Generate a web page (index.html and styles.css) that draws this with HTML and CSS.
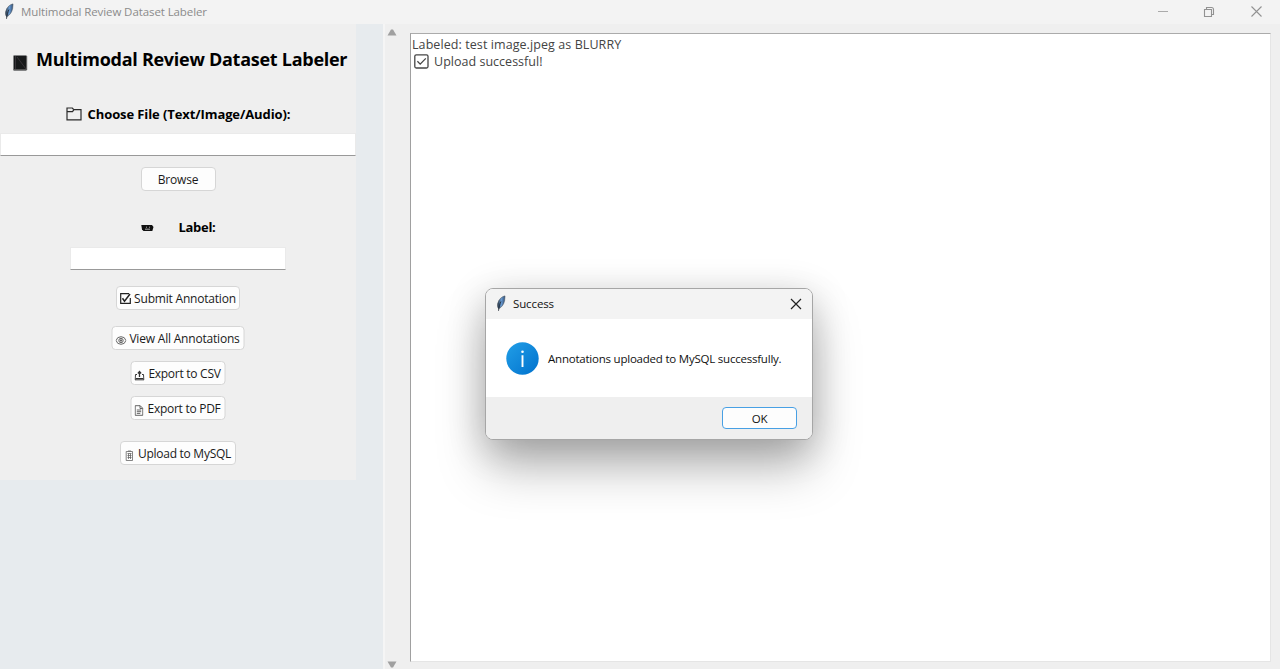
FILE: index.html
```html
<!DOCTYPE html>
<html lang="en">
<head>
<meta charset="utf-8">
<title>Multimodal Review Dataset Labeler</title>
<link rel="stylesheet" href="styles.css">
</head>
<body>
<svg class="defs" width="0" height="0">
  <defs>
    <linearGradient id="quill" x1="0" y1="0" x2="1" y2="0"><stop offset="0" stop-color="#27323e"/><stop offset=".5" stop-color="#6a9cd4"/><stop offset="1" stop-color="#2f4f78"/></linearGradient>
    <symbol id="feather" viewBox="0 0 10 17">
      <path d="M9 .9C6 1.500 2.800 4 1.700 8.500 1.200 11 1.600 12.500 2.700 13.800 5.800 12.300 8 9 8.600 5.500Z" fill="url(#quill)" stroke="#4a5561" stroke-width=".6"/>
      <path d="M5 6.500C3.800 9 3 11.500 2.500 15.800" fill="none" stroke="#18202a" stroke-width=".8"/>
    </symbol>
  </defs>
</svg>
<div class="window">
  <header class="titlebar">
    <svg class="feather" width="10" height="17"><use href="#feather"/></svg>
    <span class="window-title">Multimodal Review Dataset Labeler</span>
    <svg class="controls" width="110" height="14" viewBox="0 0 110 14" fill="none" stroke="#929292">
      <path d="M3 7.500h10" stroke="#aaa"/>
      <path d="M49.500 5.500h7v7h-7zM51.500 5.500v-2h5q2 0 2 2v5h-2" stroke-width="1.100"/>
      <path d="M96.500 2.500l10 10m0-10l-10 10" stroke-width="1.100"/>
    </svg>
  </header>
  <main class="content">
    <aside class="sidebar">
      <section class="panel">
        <h1 class="heading">
          <svg class="book" width="15" height="17" viewBox="0 0 15 17"><path d="M.5 1.500h13v15H.5z" fill="#17191a"/><path d="M2.500 2v14M4 3l9 12" stroke="#373338"/><path d="M.8 15.500h12.500M13.700 2v14" stroke="#555"/></svg>
          <span class="heading-text">Multimodal Review Dataset Labeler</span>
        </h1>
        <div class="field-label file-label">
          <svg width="16" height="14" viewBox="0 0 16 14" fill="none" stroke="#2b2b2b" stroke-width="1.200"><path d="M1 12.800V1h5.300l1.500 1.700H15v10.100zM1 4.600h5.500l1.300-1.800"/></svg>
          <span class="file-text">Choose File (Text/Image/Audio):</span>
        </div>
        <input class="entry entry-file" aria-label="File">
        <button class="button browse"><span>Browse</span></button>
        <div class="field-label tag-label">
          <svg class="tag" width="13" height="8" viewBox="0 0 13 8"><path d="M.3 1h10.700l1.500 2-1.200 4H2.500L1 5.500Z" fill="#111"/><path d="M4 5.200h5M5 3.200h1M8 3.200h1" stroke="#aaa"/></svg>
          <span class="tag-text">Label:</span>
        </div>
        <input class="entry entry-label" aria-label="Label">
        <button class="button submit">
          <svg width="11" height="11" viewBox="0 0 11 11" fill="none" stroke="#222"><path d="M9 .7H.7v9.600h9.600V5" stroke-width="1.200"/><path d="M2.500 5.300l2 2.900L10 1" stroke-width="1.500"/></svg>
          <span>Submit Annotation</span>
        </button>
        <button class="button view">
          <svg class="low" width="11" height="9" viewBox="0 0 11 9" fill="none" stroke="#666"><path d="M.6 4.500Q1.500.7 5.500.7t4.900 3.800Q9.500 8.300 5.500 8.300T.6 4.500Z"/><circle cx="5.500" cy="4.500" r="2.200"/><circle cx="5.500" cy="4.500" r=".8" fill="#333"/></svg>
          <span>View All Annotations</span>
        </button>
        <button class="button csv">
          <svg class="low" width="10" height="11" viewBox="0 0 10 11" fill="none" stroke="#333"><path d="M2.500 4.500H1L.5 9.800h9L9 4.500H7.500M1 8.500h8"/><path d="M5 7V2M3.400 3.500 5 1.500l1.600 2" stroke-width="1.300"/></svg>
          <span>Export to CSV</span>
        </button>
        <button class="button pdf">
          <svg class="low" width="9" height="11" viewBox="0 0 9 11" fill="none" stroke="#555"><path d="M.7.700h5l2.600 2.600v7H.7zM5.500.8v2.700h2.700M2.300 5h4.400M2.300 6.700h4.400M2.300 8.400h3.500" stroke-width=".9"/></svg>
          <span>Export to PDF</span>
        </button>
        <button class="button mysql">
          <svg class="low" width="9" height="11" viewBox="0 0 9 11" fill="none" stroke="#666"><path d="M1.200 1.500h6.300v9H1.200zM3 1h3M2.500 3.500h4M2.500 5.500h4M2.500 7.500h4M3.500 3.500v5.500M5.500 3.500v5.500" stroke-width=".8"/></svg>
          <span>Upload to MySQL</span>
        </button>
      </section>
    </aside>
    <div class="scrollbar">
      <svg width="10" height="7" viewBox="0 0 10 7"><path d="M4 .5h2L9.500 6.500H.5z" fill="#a0a0a0"/></svg>
      <svg width="10" height="7" viewBox="0 0 10 7"><path d="M.5.500h9L6 6.500H4z" fill="#a0a0a0"/></svg>
    </div>
    <section class="log">
      <p class="log-line"><span class="log-one">Labeled: test image.jpeg as BLURRY</span></p>
      <p class="log-line">
        <svg width="15" height="15" viewBox="0 0 15 15" fill="none" stroke="#454545" stroke-width="1.300"><rect x=".8" y=".8" width="13.200" height="13.200" rx="1.500"/><path d="M3.400 7.300l2.800 2.800 5.600-5.700"/></svg>
        <span class="log-two">Upload successful!</span>
      </p>
    </section>
  </main>
  <div class="dialog" role="dialog" aria-label="Success">
    <header class="dialog-title">
      <svg class="feather" width="10" height="17"><use href="#feather"/></svg>
      <span class="dialog-name">Success</span>
      <svg class="dialog-close" width="12" height="12" viewBox="0 0 12 12" stroke="#222" stroke-width="1.200"><path d="M1 1l10 10M11 1L1 11"/></svg>
    </header>
    <div class="dialog-body">
      <svg width="33" height="33" viewBox="0 0 33 33"><defs><linearGradient id="info" x1="0" y1="0" x2="1" y2="1"><stop offset="0" stop-color="#229fe7"/><stop offset="1" stop-color="#0071cd"/></linearGradient></defs><circle cx="16.500" cy="16.500" r="16.200" fill="url(#info)"/><circle cx="16.500" cy="9.800" r="1.300" fill="#fff"/><path d="M16.500 13.300V25" stroke="#fff" stroke-width="1.900"/></svg>
      <span class="message">Annotations uploaded to MySQL successfully.</span>
    </div>
    <footer class="dialog-footer"><button class="ok">OK</button></footer>
  </div>
</div>
</body>
</html>
```
FILE: styles.css
```css
* { box-sizing: border-box; }
body { margin: 0; overflow: hidden; font-family: "Open Sans", "Noto Sans", sans-serif; color: #111; }
button, input { font-family: inherit; }
svg { flex: none; display: block; }
span { white-space: nowrap; }
.defs { position: absolute; }
.window { position: relative; height: 669px; background: #efefef; display: flex; flex-direction: column; }
.titlebar { height: 24px; flex: none; background: #f3f3f3; display: flex; align-items: center; padding: 0 15px 2px 4px; }
.window-title { margin-left: 7px; font-size: 11.5px; letter-spacing: -.09px; color: #8b8b8b; }
.controls { margin-left: auto; margin-top: -1px; }
.content { flex: 1; display: flex; }
.sidebar { width: 383px; background: #e7ebee; }
.panel { width: 356px; height: 456px; background: #efefef; display: flex; flex-direction: column; align-items: center; }
.heading { margin: 21px 0 0; width: 100%; height: 28px; padding-left: 13px; display: flex; align-items: center; font-size: 18px; font-weight: 700; color: #000; }
.book { margin: 6px 8px 0 0; }
.heading-text { letter-spacing: -.27px; }
.field-label { display: flex; align-items: center; height: 20px; font-size: 13px; font-weight: 700; color: #000; }
.file-label { margin-top: 31px; gap: 6px; }
.file-text { letter-spacing: -.1px; }
.entry { border: 1px solid #eaeaea; border-bottom-color: #999; background: #fff; height: 23px; padding: 0 4px; flex: none; }
.entry-file { width: 356px; margin-top: 9px; }
.button { flex: none; height: 24px; border: 1px solid #d6d6d6; border-radius: 4px; background: #fdfdfd; display: flex; align-items: center; justify-content: center; gap: 3px; padding: 0; font-size: 12px; letter-spacing: -.2px; color: #1a1a1a; }
.low { margin-top: 4px; }
.browse { width: 75px; margin-top: 11px; }
.tag-label { margin-top: 26px; gap: 25px; }
.tag { margin-top: 2px; }
.tag-text { letter-spacing: -.3px; }
.entry-label { width: 216px; margin-top: 10px; }
.submit { width: 124px; margin-top: 16px; }
.view { width: 133px; margin-top: 16px; }
.csv { width: 95px; margin-top: 11px; }
.pdf { width: 95px; margin-top: 11px; }
.mysql { width: 116px; margin-top: 21px; }
.view, .csv, .pdf { transform: translateX(-.5px); }
.csv, .pdf, .mysql { letter-spacing: -.27px; gap: 4px; }
.scrollbar { width: 18px; border-left: 2px solid #f5f5f5; display: flex; flex-direction: column; justify-content: space-between; align-items: center; padding: 5px 2px 1px 0; }
.log { width: 861px; height: 629px; margin: 9px 0 0 9px; background: #fff; border: 1px solid #e5e5e5; border-top-color: #ababab; border-left-color: #a0a0a0; padding: 2px 1px; }
.log-line { margin: 0; height: 17px; display: flex; align-items: center; gap: 5px; font-size: 12.500px; color: #444; }
.log-line svg { margin-left: 2px; }
.log-one { letter-spacing: .08px; }
.log-two { letter-spacing: .02px; }
.dialog { position: absolute; left: 485px; top: 288px; width: 328px; height: 152px; border: 1px solid #a6a6a6; border-radius: 8px; background: #fff; display: flex; flex-direction: column; box-shadow: 0 30px 50px -2px rgba(0, 0, 0, .26), 0 8px 38px rgba(0, 0, 0, .2); overflow: hidden; }
.dialog-title { height: 30px; background: #f3f3f3; display: flex; align-items: center; padding: 0 10px 1px 10px; }
.dialog-name { margin-left: 7px; font-size: 11.500px; letter-spacing: -.12px; }
.dialog-close { margin-left: auto; }
.dialog-body { flex: 1; display: flex; align-items: center; padding-left: 20px; gap: 9px; }
.message { font-size: 11.500px; letter-spacing: -.22px; padding-top: 1px; }
.dialog-footer { height: 42px; background: #efefef; display: flex; justify-content: flex-end; align-items: center; padding-right: 15px; }
.ok { width: 75px; height: 22px; border: 1.500px solid #48a0e4; border-radius: 4px; background: #fdfdfd; font-size: 11.500px; letter-spacing: -.3px; padding: 0; color: #111; }
```
